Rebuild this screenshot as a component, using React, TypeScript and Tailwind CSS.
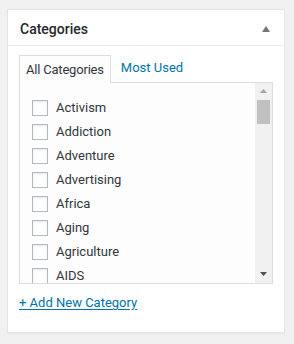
import React from 'react';

const CATEGORIES = ['Activism', 'Addiction', 'Adventure', 'Advertising', 'Africa', 'Aging', 'Agriculture', 'AIDS'];

const FONT = "font-['Segoe_UI',Roboto,'Noto_Sans',sans-serif]";

export default function App() {
  return (
    <div className={`w-[294px] h-[344px] bg-[#f1f1f1] pt-[9px] pl-[7px] ${FONT}`}>
      <div className="w-[278px] h-[324px] bg-white border border-[#e5e5e5] shadow-[0_1px_1px_rgba(0,0,0,0.04)] flex flex-col">
        {/* Header */}
        <div className="h-[36px] border-b border-[#eeeeee] flex items-center justify-between pl-[12px] pr-[14px]">
          <h2 className="text-[14px] font-medium text-[#23282d] leading-[20px] pt-[3px]">Categories</h2>
          <svg width="8" height="6" viewBox="0 0 8 6" className="mt-[2px]">
            <path d="M4 0 L8 6 L0 6 Z" fill="#72777c" />
          </svg>
        </div>

        <div className="px-[11px] pt-[8px]">
          {/* Tabs */}
          <div className="flex items-end text-[13px] relative z-10">
            <div className="h-[28px] px-[6px] pt-[4px] border border-b-0 border-[#dddddd] bg-[#fdfdfd] text-[#32373c] leading-[20px] tracking-[-0.2px] -mb-px">
              All Categories
            </div>
            <div className="h-[28px] px-[10px] pt-[4px] text-[#0073aa] leading-[20px]">Most Used</div>
          </div>

          {/* Panel */}
          <div className="h-[202px] border border-[#dddddd] bg-[#fdfdfd] flex overflow-hidden">
            <ul className="flex-1 pl-[12px] pt-[13px] overflow-hidden">
              {CATEGORIES.map((c) => (
                <li key={c} className="h-[24px] flex items-center gap-[8px] text-[13px] text-[#32373c]">
                  <span className="w-[16px] h-[16px] border border-[#b4b9be] bg-white shadow-[inset_0_1px_2px_rgba(0,0,0,0.1)] shrink-0" />
                  <span className="leading-[20px]">{c}</span>
                </li>
              ))}
            </ul>
            {/* Scrollbar */}
            <div className="w-[17px] bg-[#f1f1f1] flex flex-col items-center">
              <svg width="7" height="4" viewBox="0 0 7 4" className="mt-[6px]">
                <path d="M3.5 0 L7 4 L0 4 Z" fill="#a3a3a3" />
              </svg>
              <div className="w-[13px] h-[24px] bg-[#c1c1c1] mt-[7px]" />
              <div className="flex-1" />
              <svg width="7" height="4" viewBox="0 0 7 4" className="mb-[7px]">
                <path d="M0 0 L7 0 L3.5 4 Z" fill="#505050" />
              </svg>
            </div>
          </div>

          <div className="mt-[8px] leading-[20px]">
            <a href="#" className="inline-block text-[13px] text-[#0073aa] underline underline-offset-[2px]">
              + Add New Category
            </a>
          </div>
        </div>
      </div>
    </div>
  );
}
